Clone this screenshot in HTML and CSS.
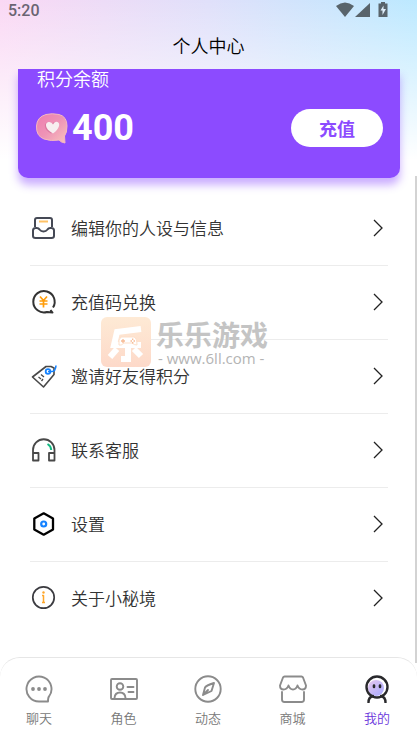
FILE: index.html
```html
<!DOCTYPE html>
<html lang="zh-CN">
<head>
<meta charset="utf-8">
<meta name="viewport" content="width=device-width, initial-scale=1">
<title>个人中心</title>
<link rel="stylesheet" href="styles.css">
</head>
<body>
<div class="app">
  <header class="header">
    <div class="status">
      <span>5:20</span>
      <svg class="status-icons" width="52" height="16" viewBox="0 0 52 16" fill="#59646b" aria-hidden="true">
        <path d="M0 4Q9-3 18 4L9 15Z"/>
        <path d="M34 1V15H19Z"/>
        <path d="M45 0h4v1.500h2.500V15h-9V1.500H45Z"/>
        <path d="M47.500 3.500L44.500 8.500h2V13l3.500-6h-2.500Z" fill="#e0effb"/>
      </svg>
    </div>
    <h1 class="title">个人中心</h1>
  </header>

  <main class="content">
    <section class="card">
      <h2 class="card-label">积分余额</h2>
      <div class="balance">
        <svg width="32" height="32" viewBox="0 0 32 32" aria-hidden="true">
          <defs>
            <linearGradient id="bubble" x1="0" y1="0" x2="1" y2="1"><stop offset="0" stop-color="#ee7daf"/><stop offset=".5" stop-color="#ee94b6"/><stop offset="1" stop-color="#f9c4bd"/></linearGradient>
          </defs>
          <path d="M10 2.500Q16 1 23 2.500Q31 4.500 31 14Q31 21 28.500 24L29 31Q25 30.500 23 28Q15 29.500 8 27Q0 24 0.500 14Q1 5 10 2.500Z" fill="url(#bubble)" stroke="#f5b8bf"/>
          <path d="M15 21.500C7 17 8 11 11.500 10.500Q14 10 16 12.500Q18 9 20 10.500C23 13 20 19 15 21.500Z" fill="#c95d8b" opacity=".5"/>
          <path d="M17 21.500C8 16.500 9 10.500 12.500 10Q15.500 9.500 17 12.500Q18.500 9 21.500 10C25 11.500 23 17.500 17 21.500Z" fill="#f7eef0"/>
        </svg>
        <strong class="points">400</strong>
        <button class="recharge" type="button">充值</button>
      </div>
    </section>

    <nav class="menu" aria-label="功能">
      <a class="row" href="#profile">
        <svg class="icon" viewBox="0 0 24 24"><path d="M3 11V4Q3 2 5 2H18Q20 2 20 4V11" stroke="#454955"/><path d="M3.500 12Q1 12 1 14.500V20Q1 22 3.500 22H19.500Q22 22 22 20V14.500Q22 12 19.500 12Q16.500 11.500 15.500 13.500Q14 15.500 11.500 15.500Q9 15.500 7.500 13.500Q6.500 11.500 3.500 12Z" stroke="#454955"/><path d="M7 5.500H16" stroke="#ffc266"/></svg>
        <span>编辑你的人设与信息</span>
        <svg class="arrow" viewBox="0 0 11 20"><path d="M1 2L9 10L1 18"/></svg>
      </a>
      <a class="row" href="#redeem">
        <svg class="icon" viewBox="0 0 24 24"><path d="M21 17.500A10.700 10.700 0 1 0 15 22L20.500 22.500L18.500 20" stroke="#333"/><path d="M8 6.500L11.500 10.500L15 6.500M7.500 11H15.500M7.500 14H15.500M11.500 11V17.500" stroke="#ff9d0a" stroke-width="1.700"/></svg>
        <span>充值码兑换</span>
        <svg class="arrow" viewBox="0 0 11 20"><path d="M1 2L9 10L1 18"/></svg>
      </a>
      <a class="row" href="#invite">
        <svg class="icon" viewBox="0 0 24 24"><path d="M14 2.500L0.500 13L11.500 23L22 10.500V4L19 2.500Z" stroke="#484848" stroke-width="1.600"/><path d="M6.500 13L9 15M9 10.500L12 13M11 15L9.500 17" stroke="#484848" stroke-width="1.300"/><circle cx="16" cy="7.500" r="2.300" stroke="#1683ff" stroke-width="1.800"/><path d="M16 7.500H20Q23.500 7.500 24 1.500" stroke="#1683ff" stroke-width="1.600"/></svg>
        <span>邀请好友得积分</span>
        <svg class="arrow" viewBox="0 0 11 20"><path d="M1 2L9 10L1 18"/></svg>
      </a>
      <a class="row" href="#service">
        <svg class="icon" viewBox="0 0 24 24"><path d="M1 16V12A10.500 10.500 0 0 1 22.500 12V22.500H17V15H22.500M1 15H6.500V22.500H1Z" stroke="#484848" stroke-width="1.800"/><path d="M15.500 6Q19 8 19.200 12" stroke="#12b981"/></svg>
        <span>联系客服</span>
        <svg class="arrow" viewBox="0 0 11 20"><path d="M1 2L9 10L1 18"/></svg>
      </a>
      <a class="row" href="#settings">
        <svg class="icon" viewBox="0 0 24 24"><path d="M11.700 1.300L21 6.500V17.500L11.700 22.700L2.300 17.500V6.500Z" stroke="#000" stroke-width="2.300"/><circle cx="11.700" cy="12" r="2.500" stroke="#1683ff" stroke-width="2.200"/></svg>
        <span>设置</span>
        <svg class="arrow" viewBox="0 0 11 20"><path d="M1 2L9 10L1 18"/></svg>
      </a>
      <a class="row" href="#about">
        <svg class="icon" viewBox="0 0 24 24"><circle cx="11.500" cy="11.500" r="10.700" stroke="#3b3b40" stroke-width="1.700"/><path d="M10 9.500H11.500V16.500M10 16.500H13" stroke="#ffa72b" stroke-width="1.500"/><circle cx="11.500" cy="6.500" r="1.200" fill="#ffa72b" stroke="none"/></svg>
        <span>关于小秘境</span>
        <svg class="arrow" viewBox="0 0 11 20"><path d="M1 2L9 10L1 18"/></svg>
      </a>
    </nav>

    <div class="watermark">
      <svg class="mark-logo" viewBox="0 0 50 50" role="img" aria-label="乐乐游戏">
        <defs><linearGradient id="mark" x1="0" y1="0" x2="0" y2="1"><stop offset="0" stop-color="#feead5"/><stop offset="1" stop-color="#fdd9c9"/></linearGradient></defs>
        <rect width="50" height="50" rx="6" fill="url(#mark)"/>
        <path d="M40 12L16 15L13 28H40M27 20V42H20M16 32L9 40M33 32L40 39" fill="none" stroke="#fff" stroke-width="6"/>
        <path d="M20 20H33Q36 21 36 28Q33 28 31 26H23Q20 29 18 28Q17 22 20 20Z" fill="#fff" stroke="#fddfc9"/>
        <path d="M22 22V26M20 24H24M29.500 24H31M32.500 24H34M31.700 21.500V23M31.700 25V26.500" stroke="#f7bb94" stroke-width="1.300"/>
      </svg>
      <div class="mark-text">
        <div class="mark-name">乐乐游戏</div>
        <div class="mark-url">- www.6ll.com -</div>
      </div>
    </div>
    <div class="scroll-thumb"></div>
  </main>

  <nav class="tabs" aria-label="主导航">
    <a class="tab" href="#chat">
      <svg class="tab-icon" viewBox="0 0 28 28"><path d="M14 26.500A12.500 12.500 0 1 1 24 21.500Q23 22.500 23 26.500Z"/><g fill="#8b8b8b" stroke="none"><circle cx="8" cy="14" r="1.900"/><circle cx="14" cy="14" r="1.900"/><circle cx="20" cy="14" r="1.900"/></g></svg>
      <span>聊天</span>
    </a>
    <a class="tab" href="#roles">
      <svg class="tab-icon" viewBox="0 0 28 28"><rect x="1" y="4" width="26" height="20" rx="1"/><circle cx="10" cy="11.500" r="3.300"/><path d="M4.500 23Q5 17.500 10 17.500Q15 17.500 15.500 23M17.500 12H23.500M18.500 17H23.500"/></svg>
      <span>角色</span>
    </a>
    <a class="tab" href="#feed">
      <svg class="tab-icon" viewBox="0 0 28 28"><circle cx="14" cy="14" r="12.700"/><path d="M20 8L17.500 16L9 20L11 12.500Q12 10.500 20 8ZM9 20L14 15"/></svg>
      <span>动态</span>
    </a>
    <a class="tab" href="#shop">
      <svg class="tab-icon" viewBox="0 0 28 28"><path d="M5.500 1.500H22.500Q23.500 1.500 24 2.500L27 10.500Q27 14.500 23.500 14.500Q20 14.500 18.500 10.500Q17 14.500 14 14.500Q11 14.500 9.500 10.500Q8 14.500 4.500 14.500Q1 14.500 1 10.500L4 2.500Q4.500 1.500 5.500 1.500ZM3 17V24.500Q3 27 5.500 27H22.500Q25 27 25 24.500V17"/></svg>
      <span>商城</span>
    </a>
    <a class="tab active" href="#me" aria-current="page">
      <svg class="tab-icon" viewBox="0 0 28 28"><defs><linearGradient id="face" x1="0" y1="0" x2="1" y2="1"><stop offset="0" stop-color="#eac9ef"/><stop offset="1" stop-color="#a5a8ff"/></linearGradient></defs><circle cx="14" cy="12" r="10.500" fill="#fff" stroke="none"/><circle cx="13" cy="13" r="8" fill="url(#face)" stroke="none"/><circle cx="14" cy="12" r="10.500"/><path d="M10 21Q5.500 22 5.500 27.500M18 21Q22.500 22 22.500 27.500"/><path d="M11 10.500V12M17 10.500V12" stroke-width="2.600"/></svg>
      <span>我的</span>
    </a>
  </nav>
</div>
</body>
</html>
```

FILE: styles.css
```css
* {
  box-sizing: border-box;
}

body {
  margin: 0;
  font-family: "Noto Sans CJK SC", sans-serif;
  font-weight: 350;
  color: #333;
  background: #fff;
}

.app {
  position: relative;
  display: flex;
  flex-direction: column;
  min-height: 100vh;
  background:
    linear-gradient(to bottom, transparent, #fff 160px),
    linear-gradient(to right, #fad8f4, #e0e0fa 50%, #bce9ff);
}

.header {
  display: flex;
  flex-direction: column;
  height: 69px;
}

.status {
  display: flex;
  align-items: center;
  justify-content: space-between;
  height: 22px;
  padding: 0 29px 0 8px;
  font: 500 16px/22px Roboto, sans-serif;
  color: #6a6472;
}

.status-icons {
  margin-bottom: 2px;
}

.title {
  margin: 0;
  font-size: 18px;
  font-weight: 350;
  line-height: 47px;
  text-align: center;
  color: #000;
}

.content {
  position: relative;
  flex: 1;
  padding: 0 17px 0 18px;
  clip-path: inset(0 0 -20px);
}

.card {
  padding: 0 17px 31px 18px;
  border-radius: 0 0 10px 10px;
  background: #8c4bff;
  box-shadow: 0 7px 8px rgba(140, 75, 255, 0.45);
  color: #fff;
}

.card-label {
  margin: 0;
  padding-left: 1px;
  font-size: 18px;
  font-weight: 350;
  line-height: 18px;
}

.balance {
  display: flex;
  align-items: center;
  gap: 4px;
  margin-top: 22px;
}

.points {
  font: 700 36px/38px Roboto, sans-serif;
}

.recharge {
  width: 92px;
  height: 38px;
  margin-left: auto;
  padding: 0;
  border: 0;
  border-radius: 19px;
  background: #fff;
  font: 700 18px/36px "Noto Sans CJK SC", sans-serif;
  color: #8c4bff;
}

.menu {
  padding: 14px 12px 0;
}

.row {
  display: flex;
  align-items: center;
  height: 74px;
  padding: 0 4px 2px 2px;
  border-bottom: 1px solid #ececec;
  font-size: 17px;
  line-height: 24px;
  color: #333;
  text-decoration: none;
}

.row:last-child {
  border-bottom: 0;
}

.icon {
  width: 24px;
  height: 24px;
  margin-right: 15px;
  overflow: visible;
  fill: none;
  stroke-width: 2;
  stroke-linejoin: round;
}

.arrow {
  width: 11px;
  height: 20px;
  margin-left: auto;
  fill: none;
  stroke: #222;
  stroke-width: 1.3;
}

.watermark {
  position: absolute;
  top: 248px;
  left: 101px;
  display: flex;
  gap: 5px;
  pointer-events: none;
}

.mark-logo {
  width: 50px;
  height: 50px;
}

.mark-name {
  font-size: 28px;
  font-weight: 700;
  line-height: 34px;
  color: #c4c4c4;
}

.mark-url {
  padding-left: 2px;
  font: 400 15px/14px "Open Sans", sans-serif;
  color: #b4b4b4;
}

.scroll-thumb {
  position: absolute;
  top: 107px;
  right: 0;
  bottom: -6px;
  width: 2px;
  background: #d3d3d3;
}

.tabs {
  position: relative;
  display: flex;
  justify-content: space-between;
  height: 82px;
  padding: 17px 20px 0 19px;
  border-top: 1px solid #e6e6e6;
  border-radius: 20px 20px 0 0;
  background: #fff;
}

.tab {
  display: flex;
  flex-direction: column;
  align-items: center;
  gap: 6px;
  width: 40px;
  font-size: 13px;
  line-height: 18px;
  color: #777;
  text-decoration: none;
}

.tab-icon {
  width: 28px;
  height: 28px;
  fill: none;
  stroke: #8b8b8b;
  stroke-width: 1.9;
  stroke-linecap: round;
  stroke-linejoin: round;
}

.tab.active {
  color: #6a35dc;
}

.active .tab-icon {
  stroke: #29292c;
  stroke-width: 2.4;
}
```
